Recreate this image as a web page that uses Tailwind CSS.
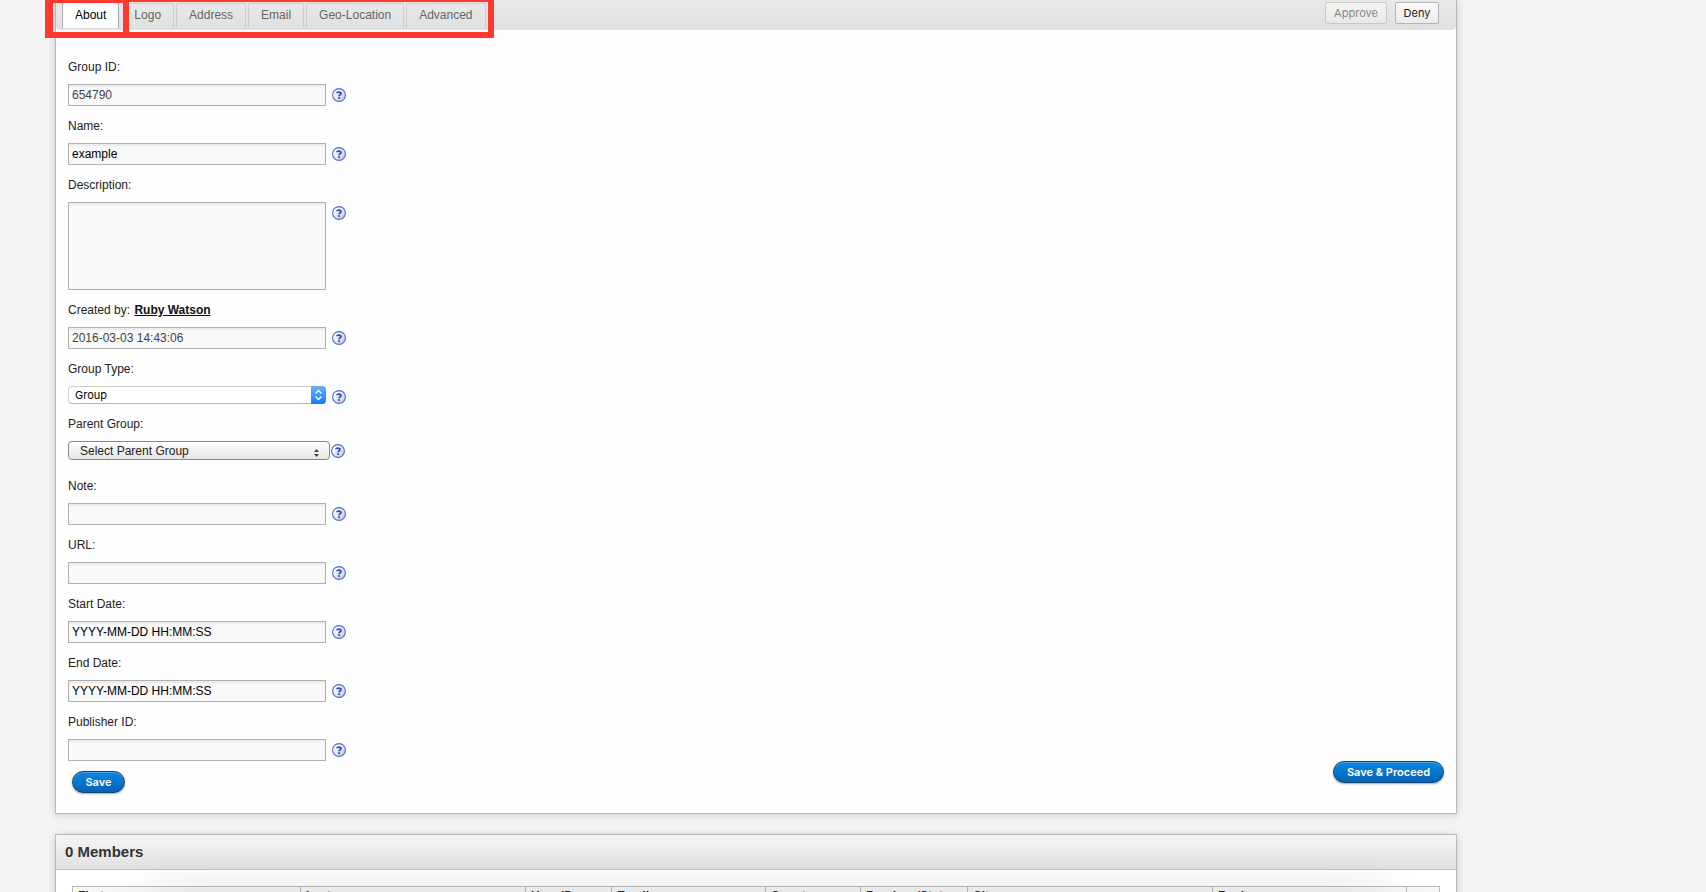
<!DOCTYPE html>
<html lang="en">
<head>
    <meta charset="UTF-8">
    <meta name="viewport" content="width=device-width, initial-scale=1.0">
    <title>Group - About</title>
    <script src="https://cdn.jsdelivr.net/npm/@tailwindcss/browser@4"></script>
</head>
<body class="relative h-screen overflow-hidden bg-[#f3f3f3] pl-[55px] pr-[249px] font-['Liberation_Sans',Arial,sans-serif] text-xs text-[#222]">

    <!-- shared help icon -->
    <svg class="absolute size-0" aria-hidden="true">
        <defs>
            <linearGradient id="help-fill" x1="0" y1="0" x2="1" y2="1">
                <stop offset="0.2" stop-color="#ffffff"/>
                <stop offset="1" stop-color="#bfc3d0"/>
            </linearGradient>
        </defs>
        <symbol id="help" viewBox="0 0 14 14">
            <circle cx="7" cy="7" r="6.4" fill="url(#help-fill)" stroke="#4a68dc" stroke-width="1.1"/>
            <path d="M5 5.3C5 3.9 9 3.5 9 5.5C9 6.8 7.1 6.7 7.1 8.2" fill="none" stroke="#2846c4" stroke-width="1.7"/>
            <rect x="6.2" y="9.2" width="1.8" height="1.7" fill="#2846c4"/>
        </symbol>
    </svg>

    <main class="border border-t-0 border-[#b9b9b9] bg-[#fefefe] shadow-[0_1px_7px_rgba(0,0,0,0.16)]">
        <header class="flex h-[30px] items-start justify-between rounded-b bg-linear-to-b from-[#e9e9e9] to-[#e0e0e0] pl-[6px] pr-[17px]">
            <nav class="flex gap-[2px] pt-[3px] leading-[22px] text-[#666]">
                <a href="#about" class="h-[26px] rounded-t-[3px] border-x border-t border-[#aaa] bg-white px-3 -mt-px pt-px text-black">About</a>
                <a href="#logo" class="ml-px h-[25px] rounded-t-[3px] border-r border-t border-[#cdcdcd] px-3">Logo</a>
                <a href="#address" class="h-[25px] rounded-t-[3px] border-x border-t border-[#cdcdcd] px-3">Address</a>
                <a href="#email" class="h-[25px] rounded-t-[3px] border-x border-t border-[#cdcdcd] px-3">Email</a>
                <a href="#geo" class="h-[25px] rounded-t-[3px] border-x border-t border-[#cdcdcd] px-3">Geo-Location</a>
                <a href="#advanced" class="h-[25px] rounded-t-[3px] border-x border-t border-[#cdcdcd] px-3">Advanced</a>
            </nav>
            <div class="flex gap-2 pt-[2px] font-[Inter,sans-serif] text-[11px]">
                <button type="button" disabled class="h-[22px] w-[62px] rounded-[2px] border border-[#c8c8c8] bg-linear-to-b from-[#f4f4f4] to-[#e8e8e8] text-[#888]">Approve</button>
                <button type="button" class="h-[22px] w-[44px] rounded-[2px] border border-[#b4b4b4] bg-linear-to-b from-[#fafafa] to-[#ebebeb] text-[#222]">Deny</button>
            </div>
        </header>

        <form class="px-3 pt-[17px] pb-5 leading-4">
            <div class="pt-3">
                <label for="group-id">Group ID:</label>
                <div class="mt-[9px] flex items-center gap-[6px]">
                    <input id="group-id" type="text" value="654790" readonly class="h-[22px] w-[258px] border border-[#b0b0b0] bg-[#f9f9f9] px-[3px] text-[#444] shadow-[inset_0_2px_2px_rgba(0,0,0,0.06)]">
                    <svg class="size-[14px]"><use href="#help"/></svg>
                </div>
            </div>
            <div class="pt-3">
                <label for="name">Name:</label>
                <div class="mt-[9px] flex items-center gap-[6px]">
                    <input id="name" type="text" value="example" class="h-[22px] w-[258px] border border-[#b0b0b0] bg-[#f9f9f9] px-[3px] text-black shadow-[inset_0_2px_2px_rgba(0,0,0,0.06)]">
                    <svg class="size-[14px]"><use href="#help"/></svg>
                </div>
            </div>
            <div class="pt-3">
                <label for="description">Description:</label>
                <div class="mt-[9px] flex items-start gap-[6px]">
                    <textarea id="description" class="h-[88px] w-[258px] resize-none border border-[#b0b0b0] bg-[#f9f9f9] px-[3px] text-black shadow-[inset_0_2px_2px_rgba(0,0,0,0.06)]"></textarea>
                    <svg class="mt-1 size-[14px]"><use href="#help"/></svg>
                </div>
            </div>
            <div class="pt-3">
                <label for="created">Created by:</label>
                <a href="#user" class="ml-px font-bold text-[#111] underline">Ruby Watson</a>
                <div class="mt-[9px] flex items-center gap-[6px]">
                    <input id="created" type="text" value="2016-03-03 14:43:06" readonly class="h-[22px] w-[258px] border border-[#b0b0b0] bg-[#f9f9f9] px-[3px] text-[#444] shadow-[inset_0_2px_2px_rgba(0,0,0,0.06)]">
                    <svg class="size-[14px]"><use href="#help"/></svg>
                </div>
            </div>
            <div class="pt-3">
                <label for="group-type">Group Type:</label>
                <div class="mt-[9px] flex items-end gap-[6px]">
                    <div class="relative">
                        <select id="group-type" class="block h-[18px] w-[258px] appearance-none rounded-[4px] border border-[#ccc] border-b-[#b5b5b5] bg-white pl-[6px] font-[Inter,sans-serif] text-[11px] leading-4 text-black">
                            <option>Group</option>
                        </select>
                        <span class="pointer-events-none absolute inset-y-0 right-0 flex w-[15px] items-center justify-center rounded-r-[4px] bg-linear-to-b from-[#67b0fa] to-[#0f7bfb]">
                            <svg class="h-[12px] w-[9px]" viewBox="0 0 9 12" fill="none" stroke="#fff" stroke-width="1.3"><path d="M1.5 4.5L4.5 1.5L7.5 4.5M1.5 7.5L4.5 10.5L7.5 7.5"/></svg>
                        </span>
                    </div>
                    <svg class="size-[14px]"><use href="#help"/></svg>
                </div>
            </div>
            <div class="pt-3">
                <label for="parent-group">Parent Group:</label>
                <div class="mt-[9px] flex items-center gap-px">
                    <div class="relative">
                        <select id="parent-group" class="block h-[19px] w-[262px] appearance-none rounded-[4px] border border-[#888] bg-linear-to-b from-white to-[#e6e6e6] pl-[11px] leading-4 text-[#222]">
                            <option>Select Parent Group</option>
                        </select>
                        <svg class="pointer-events-none absolute right-[11px] bottom-[3px] h-[8px] w-[5px]" viewBox="0 0 5 8" fill="#444"><path d="M0 3L2.5 0L5 3ZM0 5L2.5 8L5 5Z"/></svg>
                    </div>
                    <svg class="size-[14px]"><use href="#help"/></svg>
                </div>
            </div>
            <div class="mt-[6px] pt-3">
                <label for="note">Note:</label>
                <div class="mt-[9px] flex items-center gap-[6px]">
                    <input id="note" type="text" class="h-[22px] w-[258px] border border-[#b0b0b0] bg-[#f9f9f9] px-[3px] text-black shadow-[inset_0_2px_2px_rgba(0,0,0,0.06)]">
                    <svg class="size-[14px]"><use href="#help"/></svg>
                </div>
            </div>
            <div class="pt-3">
                <label for="url">URL:</label>
                <div class="mt-[9px] flex items-center gap-[6px]">
                    <input id="url" type="text" class="h-[22px] w-[258px] border border-[#b0b0b0] bg-[#f9f9f9] px-[3px] text-black shadow-[inset_0_2px_2px_rgba(0,0,0,0.06)]">
                    <svg class="size-[14px]"><use href="#help"/></svg>
                </div>
            </div>
            <div class="pt-3">
                <label for="start-date">Start Date:</label>
                <div class="mt-[9px] flex items-center gap-[6px]">
                    <input id="start-date" type="text" value="YYYY-MM-DD HH:MM:SS" class="h-[22px] w-[258px] border border-[#b0b0b0] bg-[#f9f9f9] px-[3px] text-black shadow-[inset_0_2px_2px_rgba(0,0,0,0.06)]">
                    <svg class="size-[14px]"><use href="#help"/></svg>
                </div>
            </div>
            <div class="pt-3">
                <label for="end-date">End Date:</label>
                <div class="mt-[9px] flex items-center gap-[6px]">
                    <input id="end-date" type="text" value="YYYY-MM-DD HH:MM:SS" class="h-[22px] w-[258px] border border-[#b0b0b0] bg-[#f9f9f9] px-[3px] text-black shadow-[inset_0_2px_2px_rgba(0,0,0,0.06)]">
                    <svg class="size-[14px]"><use href="#help"/></svg>
                </div>
            </div>
            <div class="pt-3">
                <label for="publisher">Publisher ID:</label>
                <div class="mt-[9px] flex items-center gap-[6px]">
                    <input id="publisher" type="text" class="h-[22px] w-[258px] border border-[#b0b0b0] bg-[#f9f9f9] px-[3px] text-black shadow-[inset_0_2px_2px_rgba(0,0,0,0.06)]">
                    <svg class="size-[14px]"><use href="#help"/></svg>
                </div>
            </div>
            <div class="flex items-start justify-between pl-1 font-[Inter,sans-serif] text-[11px] font-semibold text-white">
                <button type="submit" class="mt-[10px] h-[22px] w-[53px] rounded-full border border-[#0d4573] bg-linear-to-b from-[#0c87e2] to-[#0662b4] shadow-[0_1px_2px_rgba(0,0,0,0.35),inset_0_1px_0_rgba(255,255,255,0.25)]">Save</button>
                <button type="button" class="h-[22px] w-[111px] rounded-full border border-[#0d4573] bg-linear-to-b from-[#0c87e2] to-[#0662b4] shadow-[0_1px_2px_rgba(0,0,0,0.35),inset_0_1px_0_rgba(255,255,255,0.25)]">Save &amp; Proceed</button>
            </div>
        </form>
    </main>

    <section class="mt-5 border border-[#b9b9b9] bg-white shadow-[0_1px_7px_rgba(0,0,0,0.16)]">
        <h2 class="h-[35px] border-b border-[#c4c4c4] bg-linear-to-b from-[#f5f5f5] to-[#e1e1e1] px-[9px] text-[15px] leading-[34px] font-bold text-[#333]">0 Members</h2>
        <div class="px-4 pt-4 pb-5">
            <table class="w-full table-fixed border-collapse text-left leading-4 text-[#222]">
                <colgroup>
                    <col class="w-[228px]">
                    <col class="w-[225px]">
                    <col class="w-[86px]">
                    <col class="w-[154px]">
                    <col class="w-[95px]">
                    <col class="w-[107px]">
                    <col class="w-[245px]">
                    <col class="w-[194px]">
                    <col class="w-[33px]">
                </colgroup>
                <thead>
                    <tr class="bg-linear-to-b from-[#f8f8f8] to-[#eee] align-top">
                        <th class="border border-[#bbb] px-[5px] pt-px pb-1 font-bold">First</th>
                        <th class="border border-[#bbb] px-[5px] pt-px pb-1 font-bold">Last</th>
                        <th class="border border-[#bbb] px-[5px] pt-px pb-1 font-bold">User ID</th>
                        <th class="border border-[#bbb] px-[5px] pt-px pb-1 font-bold">Email</th>
                        <th class="border border-[#bbb] px-[5px] pt-px pb-1 font-bold">Country</th>
                        <th class="border border-[#bbb] px-[5px] pt-px pb-1 font-bold">Province/State</th>
                        <th class="border border-[#bbb] px-[5px] pt-px pb-1 font-bold">City</th>
                        <th class="border border-[#bbb] px-[5px] pt-px pb-1 font-bold">Region</th>
                        <th class="border border-[#bbb] px-[5px] pt-px pb-1"></th>
                    </tr>
                </thead>
            </table>
        </div>
    </section>

    <!-- shade along the bottom edge -->
    <div class="pointer-events-none absolute top-full right-[320px] left-[150px] h-20 shadow-[0_0_50px_rgba(0,0,0,0.12)]"></div>

    <!-- tab highlight boxes -->
    <div class="pointer-events-none absolute top-0 left-[45px] h-[38px] w-[84px] border-t-[3px] border-r-[6px] border-b-[6px] border-l-8 border-[#ff3830]"></div>
    <div class="pointer-events-none absolute top-0 left-[123px] h-[38px] w-[371px] border-t-2 border-r-[6px] border-b-[6px] border-l-[6px] border-[#ff3830]"></div>
</body>
</html>
